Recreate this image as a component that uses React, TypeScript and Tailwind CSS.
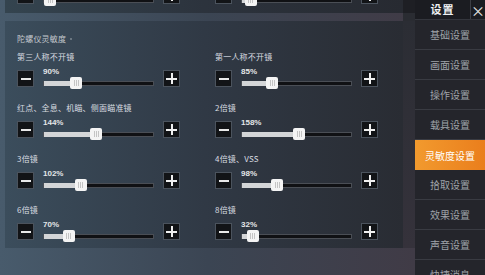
import React from "react";

const CJK = '"Noto Sans CJK SC", "Noto Sans", sans-serif';

function MinusBtn() {
  return (
    <div className="w-[17px] h-[17px] shrink-0 bg-[#121417] border border-[#4b535d] flex items-center justify-center">
      <div className="w-[10px] h-[2px] bg-[#e8e8e8]" />
    </div>
  );
}

function PlusBtn() {
  return (
    <div className="w-[17px] h-[17px] shrink-0 bg-[#121417] border border-[#4b535d] flex items-center justify-center relative">
      <div className="w-[11px] h-[2px] bg-[#f0f0f0]" />
      <div className="absolute w-[2px] h-[11px] bg-[#f0f0f0]" />
    </div>
  );
}

function Slider({ value, showPct = true }: { value: number; showPct?: boolean }) {
  const frac = value / 300;
  const center = frac * 111;
  return (
    <div className="flex flex-col w-[111px] shrink-0">
      <div
        className="h-[10px] leading-[10px] text-[8px] font-bold text-[#e4e6e8]"
        style={{ fontFamily: '"Liberation Sans", Arial, sans-serif', visibility: showPct ? "visible" : "hidden" }}
      >
        {value}%
      </div>
      <div className="h-[12px] relative flex items-center">
        <div className="w-full h-[5px] bg-[#101114] border border-[#4a4e55] relative">
          <div className="absolute left-0 top-[-1px] h-[5px] bg-[#d3d5d7]" style={{ width: center }} />
        </div>
        <div
          className="absolute top-0 h-[12px] w-[12px] rounded-[2px] bg-[#f4f4f4] flex items-center justify-center gap-[1px]"
          style={{ left: center - 6 }}
        >
          <div className="w-[1px] h-[6px] bg-[#c4c4c4]" />
          <div className="w-[1px] h-[6px] bg-[#c4c4c4]" />
          <div className="w-[1px] h-[6px] bg-[#c4c4c4]" />
        </div>
      </div>
    </div>
  );
}

function ControlRow({ value, showPct = true }: { value: number; showPct?: boolean }) {
  return (
    <div className="flex items-start gap-[9px] w-[163px]">
      <div className="mt-[3px]">
        <MinusBtn />
      </div>
      <Slider value={value} showPct={showPct} />
      <div className="mt-[3px]">
        <PlusBtn />
      </div>
    </div>
  );
}

function Setting({ label, value }: { label: string; value: number }) {
  return (
    <div className="flex flex-col">
      <div
        className="h-[12px] leading-[12px] text-[8px] tracking-[0.2px] text-[#d9dde1] whitespace-nowrap"
        style={{ fontFamily: CJK }}
      >
        {label}
      </div>
      <div className="mt-[4px]">
        <ControlRow value={value} />
      </div>
    </div>
  );
}

const settings: [string, number][] = [
  ["第三人称不开镜", 90],
  ["第一人称不开镜", 85],
  ["红点、全息、机瞄、侧面瞄准镜", 144],
  ["2倍镜", 158],
  ["3倍镜", 102],
  ["4倍镜、VSS", 98],
  ["6倍镜", 70],
  ["8倍镜", 32],
];

const menu = ["基础设置", "画面设置", "操作设置", "载具设置", "灵敏度设置", "拾取设置", "效果设置", "声音设置", "快捷消息"];

export default function App() {
  return (
    <div className="w-[485px] h-[275px] overflow-hidden flex" style={{ fontFamily: CJK }}>
      {/* main area */}
      <div className="w-[415px] h-full flex flex-col bg-gradient-to-r from-[#485b6c] via-[#3b4553] to-[#403b46]">
        <div className="flex">
          <div className="ml-[5px] w-[398px] h-[13px] overflow-hidden bg-gradient-to-r from-[#34444f] via-[#2c333d] to-[#272a31]">
            <div className="mt-[-16px] pl-[12px] grid grid-cols-[163px_163px] gap-x-[35px]">
              <ControlRow value={19} showPct={false} />
              <ControlRow value={27} showPct={false} />
            </div>
          </div>
          <div className="w-[12px] h-[13px] bg-[#1e1f24]" />
        </div>
        <div className="flex">
          <div className="ml-[5px] w-[398px] h-[8px]" />
          <div className="w-[12px] h-[8px] bg-[#2a2c32]" />
        </div>
        <div className="flex">
          <div className="ml-[5px] w-[398px] h-[227px] bg-gradient-to-r from-[#3b4d5c] via-[#303945] to-[#292c33] pl-[12px] pt-[12px]">
            <div className="flex items-center h-[12px]">
              <span className="text-[8px] leading-[12px] tracking-[0.2px] text-[#c3c8cd]">陀螺仪灵敏度</span>
              <span className="ml-[4px] w-[2px] h-[2px] rounded-full bg-[#7d8791]" />
            </div>
            <div className="mt-[6px] grid grid-cols-[163px_163px] gap-x-[35px] gap-y-[13px]">
              {settings.map(([l, v]) => (
                <Setting key={l} label={l} value={v} />
              ))}
            </div>
          </div>
          <div className="w-[12px] h-[227px] bg-gradient-to-b from-[#2b2d34] to-[#35323b]" />
        </div>
      </div>
      {/* sidebar */}
      <div className="w-[70px] h-full flex flex-col bg-[#24252b]">
        <div className="h-[20px] shrink-0 flex bg-[#1b1c21] border-b border-[#34363d]">
          <div className="w-[55px] flex items-center justify-center text-[11px] font-bold text-[#eef0f2] tracking-[1px]">
            设置
          </div>
          <div className="flex-1 flex items-center justify-center border-l border-[#3c3e45] text-[#e8e8e8] text-[14px] leading-none">
            ×
          </div>
        </div>
        {menu.map((m, i) => {
          const active = i === 4;
          return (
            <div
              key={m}
              className={
                active
                  ? "h-[30px] shrink-0 flex items-center justify-center text-[10px] text-white bg-gradient-to-r from-[#f29a2e] to-[#ea7e1c]"
                  : "h-[30px] shrink-0 flex items-center justify-center text-[10px] text-[#9fa3a9] border-b border-[#393b42]"
              }
            >
              {m}
            </div>
          );
        })}
      </div>
    </div>
  );
}
